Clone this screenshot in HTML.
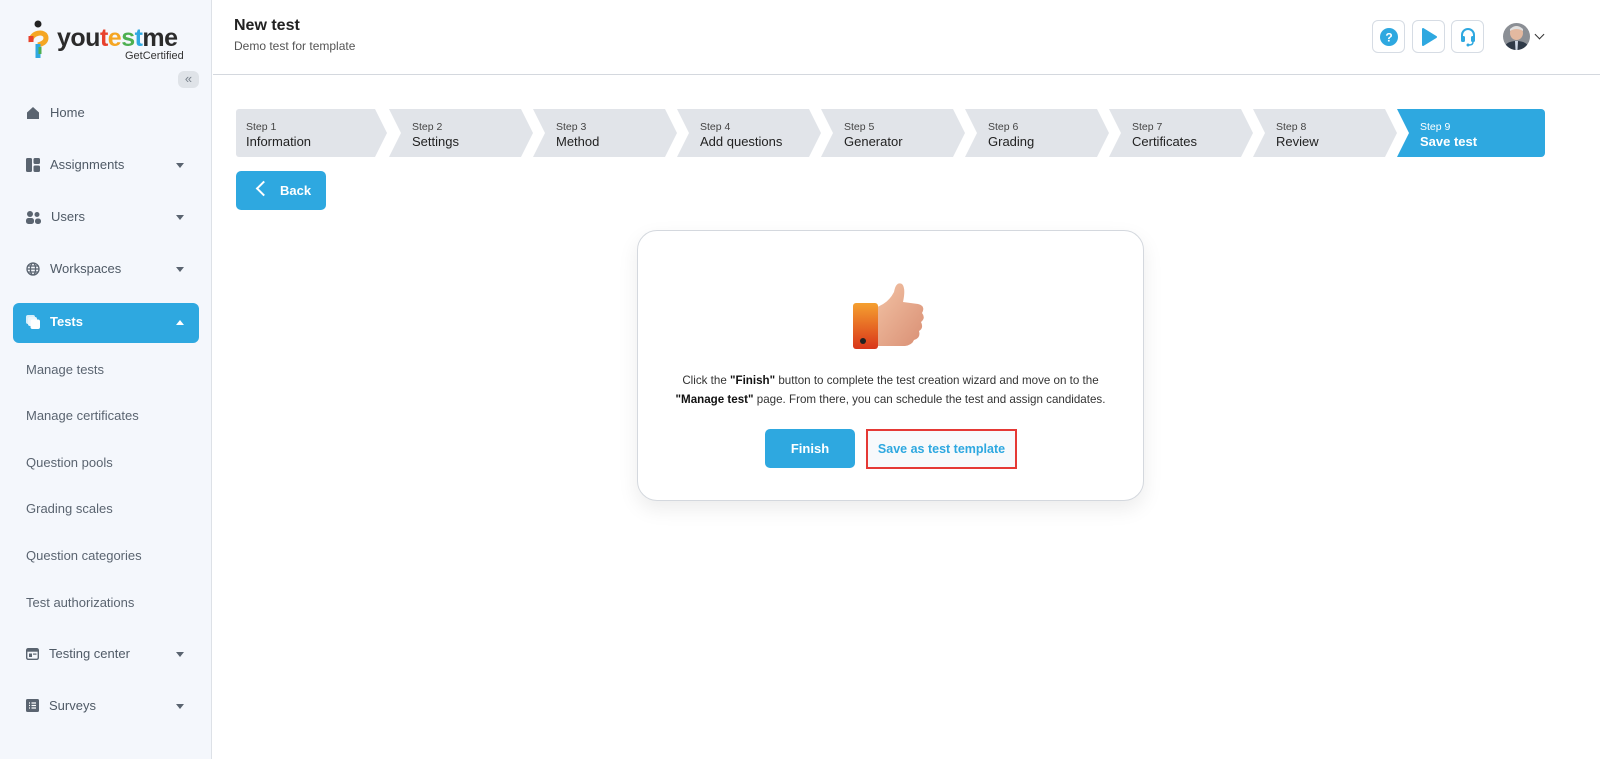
<!DOCTYPE html>
<html><head><meta charset="utf-8"><style>
*{box-sizing:border-box;margin:0;padding:0}
body{width:1600px;height:759px;overflow:hidden;background:#fff;font-family:"Liberation Sans",Arial,sans-serif;position:relative;color:#222}
.sb{position:absolute;left:0;top:0;width:212px;height:759px;background:#f4f7fc;border-right:1px solid #dde1e7}
.abs{position:absolute}
.nav{position:absolute;left:26px;font-size:13px;color:#4f5a66;display:flex;align-items:center}
.nav svg{margin-right:10px}
.caret{position:absolute;left:176px;width:0;height:0;border-left:4.5px solid transparent;border-right:4.5px solid transparent;border-top:5px solid #5a6470}
.sub{position:absolute;left:26px;font-size:13px;color:#5a6470}
.step{position:absolute;top:109px;height:48px;background:#e1e4e9;clip-path:polygon(0 0,calc(100% - 12px) 0,100% 50%,calc(100% - 12px) 100%,0 100%,12px 50%);padding-left:23px}
.step .s{font-size:10.5px;color:#444;margin-top:12px}
.step .n{font-size:13px;color:#222;margin-top:1px}
.hb{position:absolute;top:20px;width:33px;height:33px;border:1px solid #d6dce4;border-radius:6px;display:flex;align-items:center;justify-content:center;background:#fff}
</style></head><body>
<div class="sb">
  <div class="abs" style="left:28px;top:20px">
    <svg width="22" height="40" viewBox="0 0 22 40"><circle cx="10" cy="4" r="3.5" fill="#222"/><path d="M3 22 C2 12 18 10 18 18 C18 22 14 24 10 25" stroke="#f5a623" stroke-width="5" fill="none"/><path d="M3 22 L3 16" stroke="#e8412c" stroke-width="5"/><path d="M10 24 L10 38" stroke="#2ea8e0" stroke-width="5"/><path d="M12 27 L12 34" stroke="#4caf50" stroke-width="3"/></svg>
  </div>
  <div class="abs" style="left:57px;top:24px;font-size:25px;font-weight:bold;letter-spacing:-0.5px"><span style="color:#2b2b2b">you</span><span style="color:#e8412c">t</span><span style="color:#f5a623">e</span><span style="color:#4caf50">s</span><span style="color:#2ea8e0">t</span><span style="color:#2b2b2b">me</span></div>
  <div class="abs" style="left:125px;top:50px;font-size:11px;color:#333">GetCertified</div>
  <div class="abs" style="left:178px;top:71px;width:21px;height:17px;border-radius:6px;background:#dfe3e8;color:#7a838d;font-size:13px;text-align:center;line-height:16px">«</div>

  <div class="nav" style="top:105px"><svg width="14" height="14" viewBox="0 0 14 14"><path d="M1 6.5 L7 1 L13 6.5 V13 H1Z" fill="#5a6470"/></svg>Home</div>
  <div class="nav" style="top:157px"><svg width="14" height="14" viewBox="0 0 14 14"><rect x="0" y="0" width="6" height="14" rx="1.5" fill="#5a6470"/><rect x="7.5" y="0" width="6.5" height="6" rx="1.5" fill="#5a6470"/><rect x="7.5" y="7.5" width="6.5" height="6.5" rx="1.5" fill="#5a6470"/></svg>Assignments</div><div class="caret" style="top:163px"></div>
  <div class="nav" style="top:209px"><svg width="15" height="14" viewBox="0 0 15 14"><circle cx="4" cy="4" r="3" fill="#5a6470"/><circle cx="11" cy="4.5" r="2.5" fill="#5a6470"/><rect x="0" y="8" width="8" height="6" rx="2.5" fill="#5a6470"/><rect x="9" y="8.5" width="6" height="5.5" rx="2.5" fill="#5a6470"/></svg>Users</div><div class="caret" style="top:215px"></div>
  <div class="nav" style="top:261px"><svg width="14" height="14" viewBox="0 0 14 14" fill="none" stroke="#5a6470" stroke-width="1.3"><circle cx="7" cy="7" r="6"/><ellipse cx="7" cy="7" rx="2.6" ry="6"/><path d="M1 7H13M2 4H12M2 10H12"/></svg>Workspaces</div><div class="caret" style="top:267px"></div>
  <div class="abs" style="left:13px;top:303px;width:186px;height:40px;background:#2ea8e0;border-radius:6px"></div>
  <div class="nav" style="top:314px;color:#fff;font-weight:bold"><svg width="14" height="14" viewBox="0 0 14 14"><rect x="0" y="0" width="9" height="9" rx="2" fill="#d8eefa"/><rect x="2" y="2" width="9" height="9" rx="2" fill="#eaf6fc"/><rect x="4.5" y="4.5" width="9.5" height="9.5" rx="2" fill="#fff"/></svg>Tests</div>
  <div class="abs" style="left:176px;top:320px;width:0;height:0;border-left:4.5px solid transparent;border-right:4.5px solid transparent;border-bottom:5px solid #fff"></div>
  <div class="sub" style="top:362px">Manage tests</div>
  <div class="sub" style="top:408px">Manage certificates</div>
  <div class="sub" style="top:455px">Question pools</div>
  <div class="sub" style="top:501px">Grading scales</div>
  <div class="sub" style="top:548px">Question categories</div>
  <div class="sub" style="top:595px">Test authorizations</div>
  <div class="nav" style="top:646px"><svg width="13" height="12" viewBox="0 0 13 12"><rect x="0.7" y="0.7" width="11.6" height="10.6" rx="1.5" fill="none" stroke="#5a6470" stroke-width="1.4"/><rect x="0.7" y="0.7" width="11.6" height="3" fill="#5a6470"/><rect x="3" y="5.5" width="3" height="3.5" fill="#5a6470"/><rect x="7" y="5.5" width="3.5" height="1.2" fill="#5a6470"/></svg>Testing center</div><div class="caret" style="top:652px"></div>
  <div class="nav" style="top:698px"><svg width="13" height="13" viewBox="0 0 13 13"><rect width="13" height="13" rx="1.5" fill="#5a6470"/><path d="M3 4H4M3 6.5H4M3 9H4M5.5 4H10M5.5 6.5H10M5.5 9H10" stroke="#fff" stroke-width="1.2"/></svg>Surveys</div><div class="caret" style="top:704px"></div>
</div>

<div class="abs" style="left:213px;top:74px;width:1387px;height:1px;background:#d4d8de"></div>
<div class="abs" style="left:234px;top:17px;font-size:16px;font-weight:bold;color:#222">New test</div>
<div class="abs" style="left:234px;top:39px;font-size:12px;color:#555">Demo test for template</div>

<div class="hb" style="left:1372px"><svg width="20" height="20" viewBox="0 0 20 20"><circle cx="10" cy="10" r="9" fill="#2ea8e0"/><text x="10" y="14.5" font-size="12" font-weight="bold" fill="#fff" text-anchor="middle" font-family="Liberation Sans">?</text></svg></div>
<div class="hb" style="left:1412px"><svg width="20" height="20" viewBox="0 0 20 20"><path d="M4 2 L17 10 L4 18Z" fill="#2ea8e0" stroke="#2ea8e0" stroke-linejoin="round" stroke-width="2"/></svg></div>
<div class="hb" style="left:1451px"><svg width="18" height="20" viewBox="0 0 18 20"><path d="M3 11 V8 a6 6 0 0 1 12 0 V11" stroke="#2ea8e0" stroke-width="2" fill="none"/><rect x="2" y="9" width="4" height="6" rx="1.5" fill="#2ea8e0"/><rect x="12" y="9" width="4" height="6" rx="1.5" fill="#2ea8e0"/><path d="M14 15 Q14 18 10 18" stroke="#2ea8e0" stroke-width="1.5" fill="none"/><circle cx="9" cy="18" r="1.5" fill="#2ea8e0"/></svg></div>
<svg class="abs" style="left:1503px;top:23px" width="27" height="27" viewBox="0 0 27 27"><defs><clipPath id="av"><circle cx="13.5" cy="13.5" r="13.5"/></clipPath></defs><g clip-path="url(#av)"><rect width="27" height="27" fill="#8b8f95"/><ellipse cx="13.5" cy="10" rx="6.5" ry="7" fill="#e3b9a0"/><path d="M7 6 Q13.5 0 20 6 L20 8 Q13.5 4 7 8Z" fill="#e0e0e0"/><path d="M0 27 Q2 18 13.5 18 Q25 18 27 27Z" fill="#2f3a48"/><path d="M12 18 L15 18 L14.5 27 L12.5 27Z" fill="#cfd8e6"/></g></svg>
<div class="abs" style="left:1536px;top:31px;width:7px;height:7px;border-right:1.8px solid #333;border-bottom:1.8px solid #333;transform:rotate(45deg)"></div>

<div class="step" style="left:236px;width:151px;clip-path:polygon(0 0,calc(100% - 12px) 0,100% 50%,calc(100% - 12px) 100%,0 100%);border-radius:3px 0 0 3px;padding-left:10px"><div class="s">Step 1</div><div class="n">Information</div></div>
<div class="step" style="left:389px;width:144px"><div class="s">Step 2</div><div class="n">Settings</div></div>
<div class="step" style="left:533px;width:144px"><div class="s">Step 3</div><div class="n">Method</div></div>
<div class="step" style="left:677px;width:144px"><div class="s">Step 4</div><div class="n">Add questions</div></div>
<div class="step" style="left:821px;width:144px"><div class="s">Step 5</div><div class="n">Generator</div></div>
<div class="step" style="left:965px;width:144px"><div class="s">Step 6</div><div class="n">Grading</div></div>
<div class="step" style="left:1109px;width:144px"><div class="s">Step 7</div><div class="n">Certificates</div></div>
<div class="step" style="left:1253px;width:144px"><div class="s">Step 8</div><div class="n">Review</div></div>
<div class="step" style="left:1397px;width:148px;background:#2ea8e0;clip-path:polygon(0 0,100% 0,100% 100%,0 100%,12px 50%);border-radius:0 4px 4px 0"><div class="s" style="color:#fff">Step 9</div><div class="n" style="color:#fff;font-weight:bold">Save test</div></div>

<div class="abs" style="left:236px;top:171px;width:90px;height:39px;background:#2ea8e0;border-radius:5px"></div>
<div class="abs" style="left:258px;top:183px;width:11px;height:11px;border-left:2.5px solid #fff;border-bottom:2.5px solid #fff;transform:rotate(45deg)"></div>
<div class="abs" style="left:280px;top:183px;color:#fff;font-weight:bold;font-size:13px">Back</div>

<div class="abs" style="left:637px;top:230px;width:507px;height:271px;border:1px solid #d4d8de;border-radius:20px;box-shadow:0 8px 20px rgba(0,0,0,0.08);background:#fff"></div>
<svg class="abs" style="left:850px;top:280px" width="80" height="72" viewBox="0 0 80 72">
  <defs><linearGradient id="sk" x1="0" y1="0" x2="1" y2="1"><stop offset="0" stop-color="#f3c4a6"/><stop offset="1" stop-color="#d98f74"/></linearGradient>
  <linearGradient id="cf" x1="0" y1="0" x2="0" y2="1"><stop offset="0" stop-color="#f5a030"/><stop offset="1" stop-color="#d9361a"/></linearGradient></defs>
  <path d="M24 28 Q38 24 44 12 Q46 1 52 4 Q56 8 53 22 L68 24 Q76 26 72 33 Q76 38 71 42 Q74 48 69 51 Q71 58 64 60 Q62 65 55 66 L24 66Z" fill="url(#sk)"/>
  <rect x="3" y="23" width="25" height="46" rx="3" fill="url(#cf)"/>
  <circle cx="13" cy="61" r="3" fill="#222"/>
</svg>
<div class="abs" style="left:637px;top:371px;width:507px;text-align:center;font-size:11.6px;line-height:19px;color:#333">Click the <b style="color:#111">"Finish"</b> button to complete the test creation wizard and move on to the<br><b style="color:#111">"Manage test"</b> page. From there, you can schedule the test and assign candidates.</div>
<div class="abs" style="left:765px;top:429px;width:90px;height:39px;background:#2ea8e0;border-radius:5px;color:#fff;font-weight:bold;font-size:13px;text-align:center;line-height:39px">Finish</div>
<div class="abs" style="left:866px;top:429px;width:151px;height:40px;border:2px solid #e53935;background:#f7f9fb;color:#2ea8e0;font-weight:bold;font-size:12.5px;text-align:center;line-height:36px">Save as test template</div>
</body></html>
